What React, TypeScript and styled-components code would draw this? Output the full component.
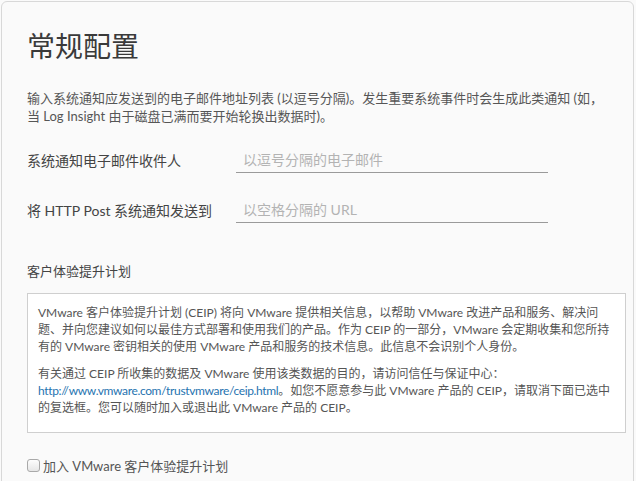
import React, { useState } from 'react';
import styled, { createGlobalStyle } from 'styled-components';

const GlobalStyle = createGlobalStyle`
  html, body {
    margin: 0;
    padding: 0;
    background: #fafafa;
  }
  body {
    font-family: Lato, "Noto Sans CJK SC", sans-serif;
    color: #565656;
    overflow: hidden;
  }
`;

const Page = styled.div`
  width: 636px;
  height: 481px;
  padding: 1px 2px 0 1px;
  box-sizing: border-box;
  overflow: hidden;
`;

const Card = styled.section`
  box-sizing: border-box;
  min-height: 520px;
  border: 1px solid #d8d8d8;
  border-radius: 6px;
  background: #fafafa;
  padding: 27px 6px 0 25px;
`;

const Title = styled.h1`
  margin: 0;
  font-size: 28px;
  line-height: 34px;
  font-weight: 400;
  color: #3a3a3a;
`;

const Description = styled.p`
  margin: 26px 0 0;
  font-size: 13px;
  line-height: 18px;
  color: #565656;
  white-space: nowrap;
`;

const Form = styled.div`
  margin-top: 22px;
  display: flex;
  flex-direction: column;
  gap: 24px;
`;

const Row = styled.label`
  display: flex;
  align-items: center;
`;

const Label = styled.span`
  width: 209px;
  flex-shrink: 0;
  font-size: 14px;
  color: #444;
`;

const TextInput = styled.input`
  box-sizing: border-box;
  width: 312px;
  height: 26px;
  padding: 0 0 0 7px;
  border: none;
  border-bottom: 1px solid #9a9a9a;
  background: transparent;
  font-family: Lato, "Noto Sans CJK SC", sans-serif;
  font-size: 14px;
  color: #333;
  outline: none;

  &::placeholder {
    color: #b3b3b3;
  }
`;

const SectionTitle = styled.h2`
  margin: 39px 0 0;
  font-size: 13px;
  line-height: 18px;
  font-weight: 400;
  color: #444;
`;

const InfoBox = styled.div`
  box-sizing: border-box;
  width: 599px;
  margin-top: 13px;
  padding: 10px 10px 16px;
  border: 1px solid #cfcfcf;
  background: #fff;
  font-size: 12px;
  line-height: 17px;
  color: #555;
  white-space: nowrap;
`;

const Para = styled.p`
  margin: 0;

  & + & {
    margin-top: 10px;
  }
`;

const Link = styled.a`
  color: #1f73b0;
  text-decoration: none;
  letter-spacing: -0.35px;
`;

const CheckRow = styled.label`
  display: flex;
  align-items: center;
  gap: 3px;
  margin-top: 23px;
  font-size: 13px;
  color: #555;
  cursor: pointer;
`;

const Box = styled.span<{ checked: boolean }>`
  box-sizing: border-box;
  width: 13px;
  height: 13px;
  border: 1px solid #a9a9a9;
  border-radius: 3px;
  background: ${(p) => (p.checked ? '#0079b8' : 'linear-gradient(#fdfdfd, #e6e6e6)')};
`;

const HiddenCheck = styled.input`
  display: none;
`;

const App = () => {
  const [joined, setJoined] = useState<boolean>(false);

  return (
    <Page>
      <GlobalStyle />
      <Card>
        <Title>常规配置</Title>
        <Description>
          输入系统通知应发送到的电子邮件地址列表 (以逗号分隔)。发生重要系统事件时会生成此类通知 (如，
          <br />当 Log Insight 由于磁盘已满而要开始轮换出数据时)。
        </Description>

        <Form>
          <Row>
            <Label>系统通知电子邮件收件人</Label>
            <TextInput placeholder="以逗号分隔的电子邮件" />
          </Row>
          <Row>
            <Label>将 HTTP Post 系统通知发送到</Label>
            <TextInput placeholder="以空格分隔的 URL" />
          </Row>
        </Form>

        <SectionTitle>客户体验提升计划</SectionTitle>
        <InfoBox>
          <Para>
            VMware 客户体验提升计划 (CEIP) 将向 VMware 提供相关信息，以帮助 VMware 改进产品和服务、解决问
            <br />
            题、并向您建议如何以最佳方式部署和使用我们的产品。作为 CEIP 的一部分，VMware 会定期收集和您所持
            <br />
            有的 VMware 密钥相关的使用 VMware 产品和服务的技术信息。此信息不会识别个人身份。
          </Para>
          <Para>
            有关通过 CEIP 所收集的数据及 VMware 使用该类数据的目的，请访问信任与保证中心：
            <br />
            <Link href="#">http://www.vmware.com/trustvmware/ceip.html</Link>。如您不愿意参与此 VMware 产品的 CEIP，请取消下面已选中
            <br />
            的复选框。您可以随时加入或退出此 VMware 产品的 CEIP。
          </Para>
        </InfoBox>

        <CheckRow>
          <HiddenCheck type="checkbox" checked={joined} onChange={() => setJoined(!joined)} />
          <Box checked={joined} />
          加入 VMware 客户体验提升计划
        </CheckRow>
      </Card>
    </Page>
  );
};

export default App;
